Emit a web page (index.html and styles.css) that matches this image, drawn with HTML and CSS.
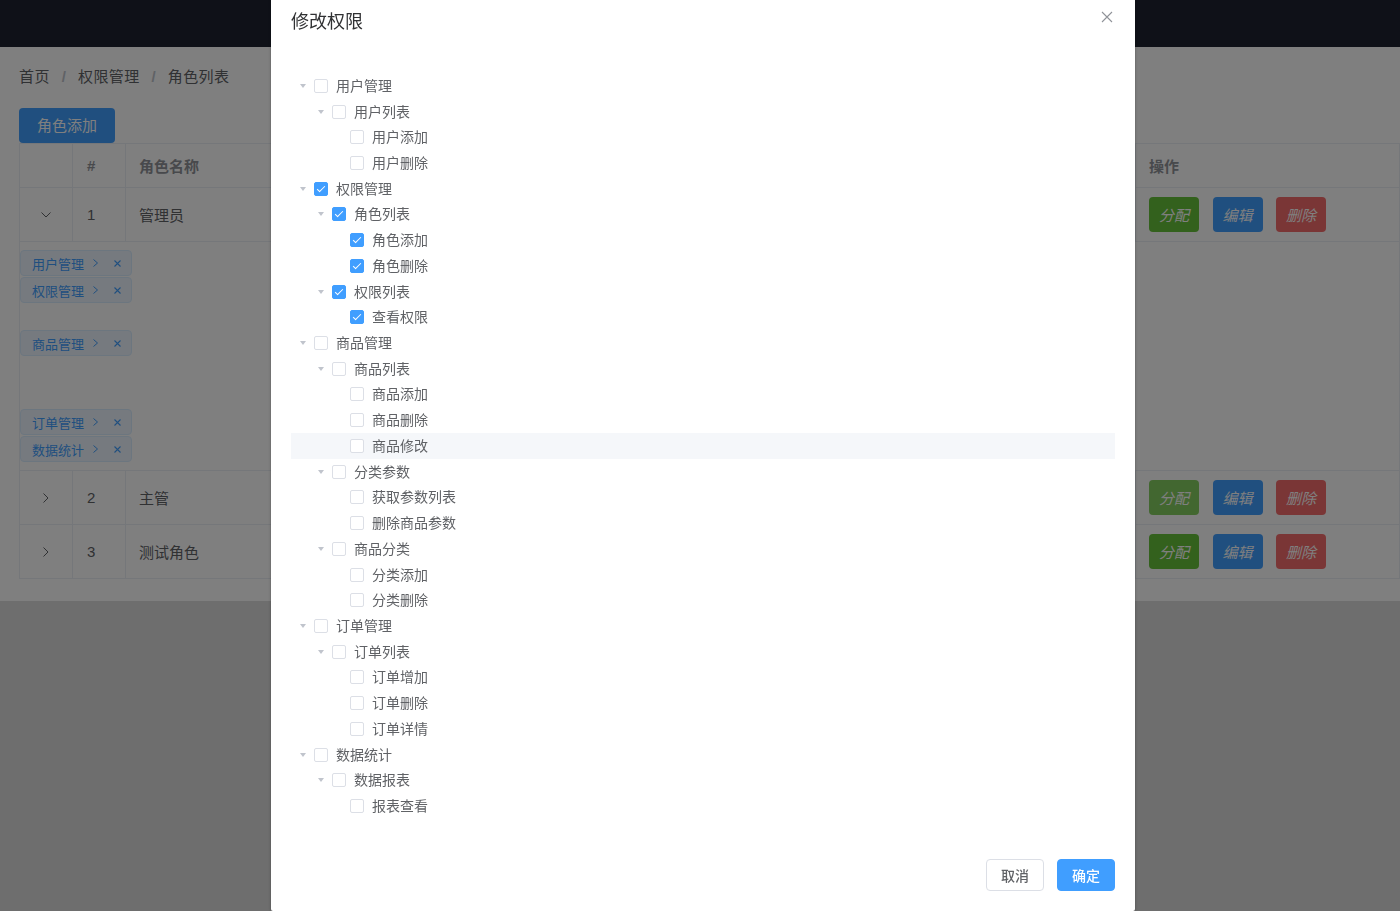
FILE: index.html
```html
<!DOCTYPE html>
<html lang="zh-CN">
<head>
<meta charset="utf-8">
<title>角色列表</title>
<link rel="stylesheet" href="styles.css">
</head>
<body>
<header class="topbar"></header>
<main class="page">
  <nav class="breadcrumb">
    <span class="crumb">首页</span><span class="sep">/</span><span class="crumb">权限管理</span><span class="sep">/</span><span class="crumb">角色列表</span>
  </nav>
  <button class="btn-add">角色添加</button>
  <div class="table">
    <div class="tr thead">
      <div class="td c-expand"></div>
      <div class="td c-index">#</div>
      <div class="td c-name">角色名称</div>
      <div class="td c-op">操作</div>
    </div>
    <div class="tr row">
      <div class="td c-expand"><svg class="chev" width="10" height="6" viewBox="0 0 10 6"><polyline points="0.5,0.5 5,5 9.5,0.5" fill="none" stroke="#606266" stroke-width="1"/></svg></div>
      <div class="td c-index">1</div>
      <div class="td c-name">管理员</div>
      <div class="td c-op"><button class="op op-assign">分配</button><button class="op op-edit">编辑</button><button class="op op-del">删除</button></div>
    </div>
    <div class="expanded">
      <div class="lv1 span1"><span class="tag">用户管理<svg class="tag-arrow" width="5" height="8" viewBox="0 0 5 8"><polyline points="0.5,0.5 4.5,4 0.5,7.5" fill="none" stroke="#409eff" stroke-width="1"/></svg><svg class="tag-close" width="7" height="7" viewBox="0 0 7 7"><path d="M0.5 0.5L6.5 6.5M6.5 0.5L0.5 6.5" stroke="#409eff" stroke-width="1.1"/></svg></span></div>
      <div class="lv1 span2"><span class="tag">权限管理<svg class="tag-arrow" width="5" height="8" viewBox="0 0 5 8"><polyline points="0.5,0.5 4.5,4 0.5,7.5" fill="none" stroke="#409eff" stroke-width="1"/></svg><svg class="tag-close" width="7" height="7" viewBox="0 0 7 7"><path d="M0.5 0.5L6.5 6.5M6.5 0.5L0.5 6.5" stroke="#409eff" stroke-width="1.1"/></svg></span></div>
      <div class="lv1 span3"><span class="tag">商品管理<svg class="tag-arrow" width="5" height="8" viewBox="0 0 5 8"><polyline points="0.5,0.5 4.5,4 0.5,7.5" fill="none" stroke="#409eff" stroke-width="1"/></svg><svg class="tag-close" width="7" height="7" viewBox="0 0 7 7"><path d="M0.5 0.5L6.5 6.5M6.5 0.5L0.5 6.5" stroke="#409eff" stroke-width="1.1"/></svg></span></div>
      <div class="lv1 span1"><span class="tag">订单管理<svg class="tag-arrow" width="5" height="8" viewBox="0 0 5 8"><polyline points="0.5,0.5 4.5,4 0.5,7.5" fill="none" stroke="#409eff" stroke-width="1"/></svg><svg class="tag-close" width="7" height="7" viewBox="0 0 7 7"><path d="M0.5 0.5L6.5 6.5M6.5 0.5L0.5 6.5" stroke="#409eff" stroke-width="1.1"/></svg></span></div>
      <div class="lv1 span1"><span class="tag">数据统计<svg class="tag-arrow" width="5" height="8" viewBox="0 0 5 8"><polyline points="0.5,0.5 4.5,4 0.5,7.5" fill="none" stroke="#409eff" stroke-width="1"/></svg><svg class="tag-close" width="7" height="7" viewBox="0 0 7 7"><path d="M0.5 0.5L6.5 6.5M6.5 0.5L0.5 6.5" stroke="#409eff" stroke-width="1.1"/></svg></span></div>
    </div>
    <div class="tr row">
      <div class="td c-expand"><svg class="chev" width="6" height="10" viewBox="0 0 6 10"><polyline points="0.5,0.5 5,5 0.5,9.5" fill="none" stroke="#606266" stroke-width="1"/></svg></div>
      <div class="td c-index">2</div>
      <div class="td c-name">主管</div>
      <div class="td c-op"><button class="op op-assign hover">分配</button><button class="op op-edit">编辑</button><button class="op op-del">删除</button></div>
    </div>
    <div class="tr row">
      <div class="td c-expand"><svg class="chev" width="6" height="10" viewBox="0 0 6 10"><polyline points="0.5,0.5 5,5 0.5,9.5" fill="none" stroke="#606266" stroke-width="1"/></svg></div>
      <div class="td c-index">3</div>
      <div class="td c-name">测试角色</div>
      <div class="td c-op"><button class="op op-assign">分配</button><button class="op op-edit">编辑</button><button class="op op-del">删除</button></div>
    </div>
  </div>
</main>

<div class="mask"></div>

<div class="dialog">
  <div class="dlg-header">
    <span class="dlg-title">修改权限</span>
    <button class="dlg-close"><svg width="16" height="16" viewBox="0 0 16 16"><path d="M3 3L13 13M13 3L3 13" stroke="#909399" stroke-width="1.1"/></svg></button>
  </div>
  <div class="dlg-body">
    <div class="tree">
      <div class="node l1"><span class="caret"></span><span class="cb"></span><span class="label">用户管理</span></div>
      <div class="node l2"><span class="caret"></span><span class="cb"></span><span class="label">用户列表</span></div>
      <div class="node l3"><span class="caret leaf"></span><span class="cb"></span><span class="label">用户添加</span></div>
      <div class="node l3"><span class="caret leaf"></span><span class="cb"></span><span class="label">用户删除</span></div>
      <div class="node l1"><span class="caret"></span><span class="cb on"></span><span class="label">权限管理</span></div>
      <div class="node l2"><span class="caret"></span><span class="cb on"></span><span class="label">角色列表</span></div>
      <div class="node l3"><span class="caret leaf"></span><span class="cb on"></span><span class="label">角色添加</span></div>
      <div class="node l3"><span class="caret leaf"></span><span class="cb on"></span><span class="label">角色删除</span></div>
      <div class="node l2"><span class="caret"></span><span class="cb on"></span><span class="label">权限列表</span></div>
      <div class="node l3"><span class="caret leaf"></span><span class="cb on"></span><span class="label">查看权限</span></div>
      <div class="node l1"><span class="caret"></span><span class="cb"></span><span class="label">商品管理</span></div>
      <div class="node l2"><span class="caret"></span><span class="cb"></span><span class="label">商品列表</span></div>
      <div class="node l3"><span class="caret leaf"></span><span class="cb"></span><span class="label">商品添加</span></div>
      <div class="node l3"><span class="caret leaf"></span><span class="cb"></span><span class="label">商品删除</span></div>
      <div class="node l3 hovered"><span class="caret leaf"></span><span class="cb"></span><span class="label">商品修改</span></div>
      <div class="node l2"><span class="caret"></span><span class="cb"></span><span class="label">分类参数</span></div>
      <div class="node l3"><span class="caret leaf"></span><span class="cb"></span><span class="label">获取参数列表</span></div>
      <div class="node l3"><span class="caret leaf"></span><span class="cb"></span><span class="label">删除商品参数</span></div>
      <div class="node l2"><span class="caret"></span><span class="cb"></span><span class="label">商品分类</span></div>
      <div class="node l3"><span class="caret leaf"></span><span class="cb"></span><span class="label">分类添加</span></div>
      <div class="node l3"><span class="caret leaf"></span><span class="cb"></span><span class="label">分类删除</span></div>
      <div class="node l1"><span class="caret"></span><span class="cb"></span><span class="label">订单管理</span></div>
      <div class="node l2"><span class="caret"></span><span class="cb"></span><span class="label">订单列表</span></div>
      <div class="node l3"><span class="caret leaf"></span><span class="cb"></span><span class="label">订单增加</span></div>
      <div class="node l3"><span class="caret leaf"></span><span class="cb"></span><span class="label">订单删除</span></div>
      <div class="node l3"><span class="caret leaf"></span><span class="cb"></span><span class="label">订单详情</span></div>
      <div class="node l1"><span class="caret"></span><span class="cb"></span><span class="label">数据统计</span></div>
      <div class="node l2"><span class="caret"></span><span class="cb"></span><span class="label">数据报表</span></div>
      <div class="node l3"><span class="caret leaf"></span><span class="cb"></span><span class="label">报表查看</span></div>
    </div>
  </div>
  <div class="dlg-footer">
    <button class="fbtn fbtn-cancel">取消</button>
    <button class="fbtn fbtn-ok">确定</button>
  </div>
</div>
</body>
</html>
```
FILE: styles.css
```css
* { box-sizing: border-box; }
html, body { margin: 0; padding: 0; }
body {
  width: 1400px;
  height: 911px;
  overflow: hidden;
  position: relative;
  background: #dcdcdc;
  font-family: "Liberation Sans", "Noto Sans CJK SC", sans-serif;
  color: #606266;
}
button { font-family: inherit; cursor: pointer; }

.topbar { height: 47px; background: #1e2330; }

.page {
  background: #fff;
  height: 554px;
  padding: 20px 0 0 19px;
}

.breadcrumb {
  display: flex;
  height: 20px;
  line-height: 20px;
  font-size: 15px;
  color: #606266;
}
.crumb { letter-spacing: 0.4px; }
.sep { margin: 0 12px; color: #c0c4cc; font-weight: 700; }

.btn-add {
  display: block;
  margin-top: 21px;
  height: 35px;
  padding: 0 18px;
  border: 0;
  border-radius: 4px;
  background: #409eff;
  color: #fff;
  font-size: 15px;
  line-height: 35px;
}

.table {
  border-left: 1px solid #ebeef5;
  border-top: 1px solid #ebeef5;
  font-size: 15px;
  color: #606266;
}
.tr {
  display: grid;
  grid-template-columns: 53px 53px 1010px 1fr;
}
.td {
  display: flex;
  align-items: center;
  border-right: 1px solid #ebeef5;
  border-bottom: 1px solid #ebeef5;
}
.thead .td { height: 44px; font-weight: 700; color: #909399; }
.row .td { height: 54px; }
.row .td.c-name, .row .td.c-index { padding-bottom: 1px; }
.c-expand { justify-content: center; }
.c-index { padding-left: 14px; }
.c-name { padding-left: 13px; }
.c-op { padding-left: 13px; gap: 13.5px; }

.op {
  height: 35px;
  padding: 0 10px;
  border: 0;
  border-radius: 4px;
  color: #fff;
  font-size: 15px;
  font-style: italic;
}
.op-assign { background: #67c23a; }
.op-assign.hover { background: #85ce61; }
.op-edit { background: #409eff; }
.op-del { background: #f56c6c; }

.expanded {
  padding: 8px 0 7px 0;
  border-right: 1px solid #ebeef5;
  border-bottom: 1px solid #ebeef5;
}
.lv1 { display: flex; align-items: flex-start; }
.span1 { height: 27px; }
.span2 { height: 53px; }
.span3 { height: 79px; }

.tag {
  display: inline-flex;
  align-items: center;
  height: 26px;
  padding: 0 10px 0 11px;
  border: 1px solid #d9ecff;
  border-radius: 4px;
  background: #ecf5ff;
  color: #409eff;
  font-size: 13px;
}
.tag-arrow { margin-left: 9px; }
.tag-close { margin-left: 16px; }

/* modal */
.mask {
  position: fixed;
  inset: 0;
  background: rgba(0, 0, 0, 0.5);
}
.dialog {
  position: absolute;
  left: 271px;
  top: -11px;
  width: 864px;
  background: #fff;
  border-radius: 2px;
  box-shadow: 0 1px 3px rgba(0, 0, 0, 0.3);
}
.dlg-header { position: relative; padding: 20px 20px 10px; }
.dlg-title { display: block; font-size: 18px; line-height: 24px; color: #303133; padding-top: 1px; }
.dlg-close {
  position: absolute;
  top: 20px;
  right: 20px;
  width: 16px;
  height: 16px;
  padding: 0;
  border: 0;
  background: none;
}
.dlg-close svg { display: block; }

.dlg-body { padding: 29px 20px 30px; }

.node {
  display: flex;
  align-items: center;
  height: 25.72px;
  font-size: 14px;
  color: #606266;
}
.node.l2 { padding-left: 18px; }
.node.l3 { padding-left: 36px; }
.node.hovered { background: #f5f7fa; }

.caret {
  width: 24px;
  height: 12px;
  display: flex;
  align-items: center;
  justify-content: center;
}
.caret::before {
  content: "";
  width: 0;
  height: 0;
  border-left: 3.5px solid transparent;
  border-right: 3.5px solid transparent;
  border-top: 4px solid #c0c4cc;
}
.caret.leaf::before { border-top-color: transparent; }

.cb {
  position: relative;
  width: 14px;
  height: 14px;
  margin: 0 8px 0 -1px;
  border: 1px solid #dcdfe6;
  border-radius: 2px;
  background: #fff;
}
.cb.on { background: #409eff; border-color: #409eff; }
.cb.on::after {
  content: "";
  position: absolute;
  left: 4px;
  top: 1px;
  width: 3px;
  height: 7px;
  border: 1px solid #fff;
  border-left: 0;
  border-top: 0;
  transform: rotate(45deg);
}
.label { line-height: 20px; }

.dlg-footer {
  display: flex;
  justify-content: flex-end;
  gap: 13px;
  padding: 10px 20px 20px;
}
.fbtn {
  height: 32px;
  padding: 0 14px;
  border: 1px solid #dcdfe6;
  border-radius: 4px;
  font-size: 14px;
  font-weight: 500;
}
.fbtn-cancel { background: #fff; color: #606266; }
.fbtn-ok { background: #409eff; border-color: #409eff; color: #fff; }
```
